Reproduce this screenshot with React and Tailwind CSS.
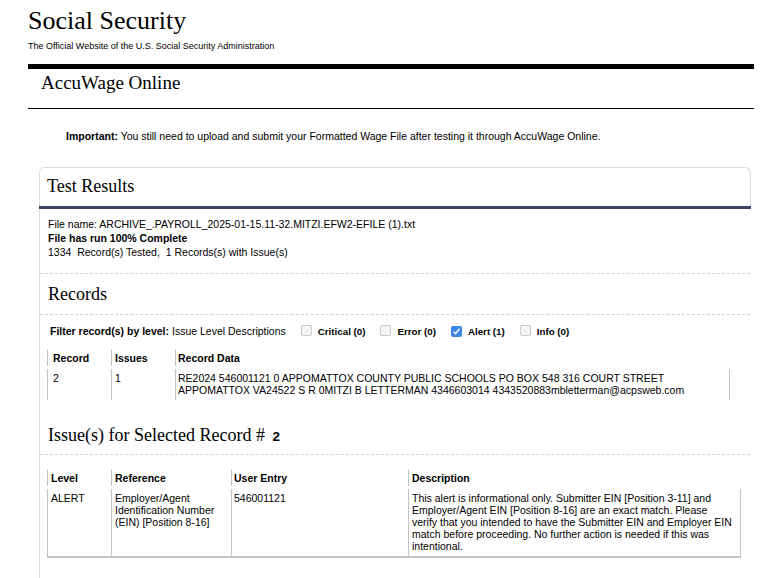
import React from 'react';

const sans = { fontFamily: '"Liberation Sans", Arial, sans-serif' };
const serif = { fontFamily: '"Liberation Serif", "Times New Roman", serif' };

function Box({ checked }) {
  if (checked) {
    return (
      <span className="ml-[15px] mr-[6px] inline-flex h-[11px] w-[11px] items-center justify-center rounded-[2px] bg-[#3a84e6] align-[-1px]">
        <svg width="9" height="9" viewBox="0 0 10 10">
          <path d="M1.8 5.2 L4 7.4 L8.4 2" fill="none" stroke="#fff" strokeWidth="1.6" />
        </svg>
      </span>
    );
  }
  return (
    <span className="ml-[15px] mr-[6px] inline-block h-[11px] w-[11px] rounded-[2px] border border-[#c9c9c9] bg-[#f4f4f4] align-[-1px]" />
  );
}

function Dashed() {
  return <div className="-ml-[8px] mr-[1px] border-t border-dashed border-[#d4d4d4]" />;
}

export default function App() {
  return (
    <div className="min-h-[578px] bg-white text-black" style={sans}>
      <div className="ml-[28px] w-[726px]">
        <h1 className="mt-[6px] text-[26px] leading-[30px]" style={serif}>Social Security</h1>
        <p className="mt-[5px] text-[9px] leading-[10px]">The Official Website of the U.S. Social Security Administration</p>
        <div className="mt-[13px] h-[5px] bg-black" />
        <h2 className="ml-[13px] mt-[2px] text-[19px] leading-[24px]" style={serif}>AccuWage Online</h2>
        <div className="mt-[13px] h-px bg-black" />

        <p className="ml-[38px] mt-[21px] text-[10.5px] leading-[12px]">
          <b>Important:</b> You still need to upload and submit your Formatted Wage File after testing it through AccuWage Online.
        </p>

        <div className="ml-[11px] mt-[25px] w-[712px]">
          <div className="rounded-t-[6px] border border-b-0 border-[#dcdcdc]">
            <h3 className="pb-[8px] pl-[7px] pt-[6px] text-[18px] leading-[24px]" style={serif}>Test Results</h3>
            <div className="-mx-px h-[3px] bg-[#394263]" />
          </div>

          <div className="border-l border-[#dcdcdc] pb-[30px] pl-[8px]">
            <div className="pt-[8px] text-[10.5px] leading-[14px]">
              <p>File name: ARCHIVE_.PAYROLL_2025-01-15.11-32.MITZI.EFW2-EFILE (1).txt</p>
              <p className="font-bold">File has run 100% Complete</p>
              <p className="whitespace-pre">1334  Record(s) Tested,  1 Records(s) with Issue(s)</p>
            </div>

            <div className="mt-[14px]"><Dashed /></div>
            <h3 className="pt-[8px] pb-[8px] text-[18px] leading-[24px]" style={serif}>Records</h3>
            <Dashed />

            <div className="ml-[2px] mt-[10px] text-[10.5px] leading-[12px]">
              <b>Filter record(s) by level:</b> Issue Level Descriptions
              <span className="text-[9.75px]">
                <Box /><b>Critical (0)</b>
                <Box /><b>Error (0)</b>
                <Box checked /><b>Alert (1)</b>
                <Box /><b>Info (0)</b>
              </span>
            </div>

            <div className="-ml-px mt-[12px] w-[683px] text-[10.5px] leading-[12px]">
              <div className="flex font-bold">
                <div className="w-[64px] border-l border-[#c4c4c4] px-[5px] py-[2px]">Record</div>
                <div className="w-[64px] border-l border-[#c4c4c4] px-[3px] py-[2px]">Issues</div>
                <div className="flex-1 border-l border-[#c4c4c4] px-[2px] py-[2px]">Record Data</div>
              </div>
              <div className="mt-[3px] flex">
                <div className="w-[64px] border-l border-[#c4c4c4] px-[5px] pb-[4px] pt-[3px]">2</div>
                <div className="w-[64px] border-l border-[#c4c4c4] px-[3px] pb-[4px] pt-[3px]">1</div>
                <div className="flex-1 border-x border-[#c4c4c4] px-[2px] pb-[4px] pt-[3px]">
                  RE2024 546001121 0 APPOMATTOX COUNTY PUBLIC SCHOOLS PO BOX 548 316 COURT STREET APPOMATTOX VA24522 S R 0MITZI B LETTERMAN 4346603014 4343520883mbletterman@acpsweb.com
                </div>
              </div>
            </div>

            <h3 className="pt-[23px] pb-[5px] text-[18px] leading-[24px]" style={serif}>
              Issue(s) for Selected Record #{' '}
              <span className="ml-[3px] text-[13.5px] font-bold" style={sans}>2</span>
            </h3>
            <Dashed />

            <div className="-ml-px mt-[15px] w-[694px] text-[10.5px] leading-[12px]">
              <div className="flex font-bold">
                <div className="w-[64px] border-l border-[#c4c4c4] px-[3px] py-[2px]">Level</div>
                <div className="w-[120px] border-l border-[#c4c4c4] px-[3px] py-[2px]">Reference</div>
                <div className="w-[177px] border-l border-[#c4c4c4] px-[2px] py-[2px]">User Entry</div>
                <div className="flex-1 border-l border-[#c4c4c4] px-[3px] py-[2px]">Description</div>
              </div>
              <div className="mt-[3px] flex border-b-2 border-[#c4c4c4]">
                <div className="w-[64px] border-l border-[#c4c4c4] px-[3px] pb-[4px] pt-[3px]">ALERT</div>
                <div className="w-[120px] border-l border-[#c4c4c4] px-[3px] pb-[4px] pt-[3px]">Employer/Agent Identification Number (EIN) [Position 8-16]</div>
                <div className="w-[177px] border-l border-[#c4c4c4] px-[2px] pb-[4px] pt-[3px]">546001121</div>
                <div className="flex-1 border-x border-[#c4c4c4] pl-[3px] pr-[2px] pb-[4px] pt-[3px]">
                  This alert is informational only. Submitter EIN [Position 3-11] and<br />
                  Employer/Agent EIN [Position 8-16] are an exact match. Please<br />
                  verify that you intended to have the Submitter EIN and Employer EIN<br />
                  match before proceeding. No further action is needed if this was<br />
                  intentional.
                </div>
              </div>
            </div>
          </div>
        </div>
      </div>
    </div>
  );
}
